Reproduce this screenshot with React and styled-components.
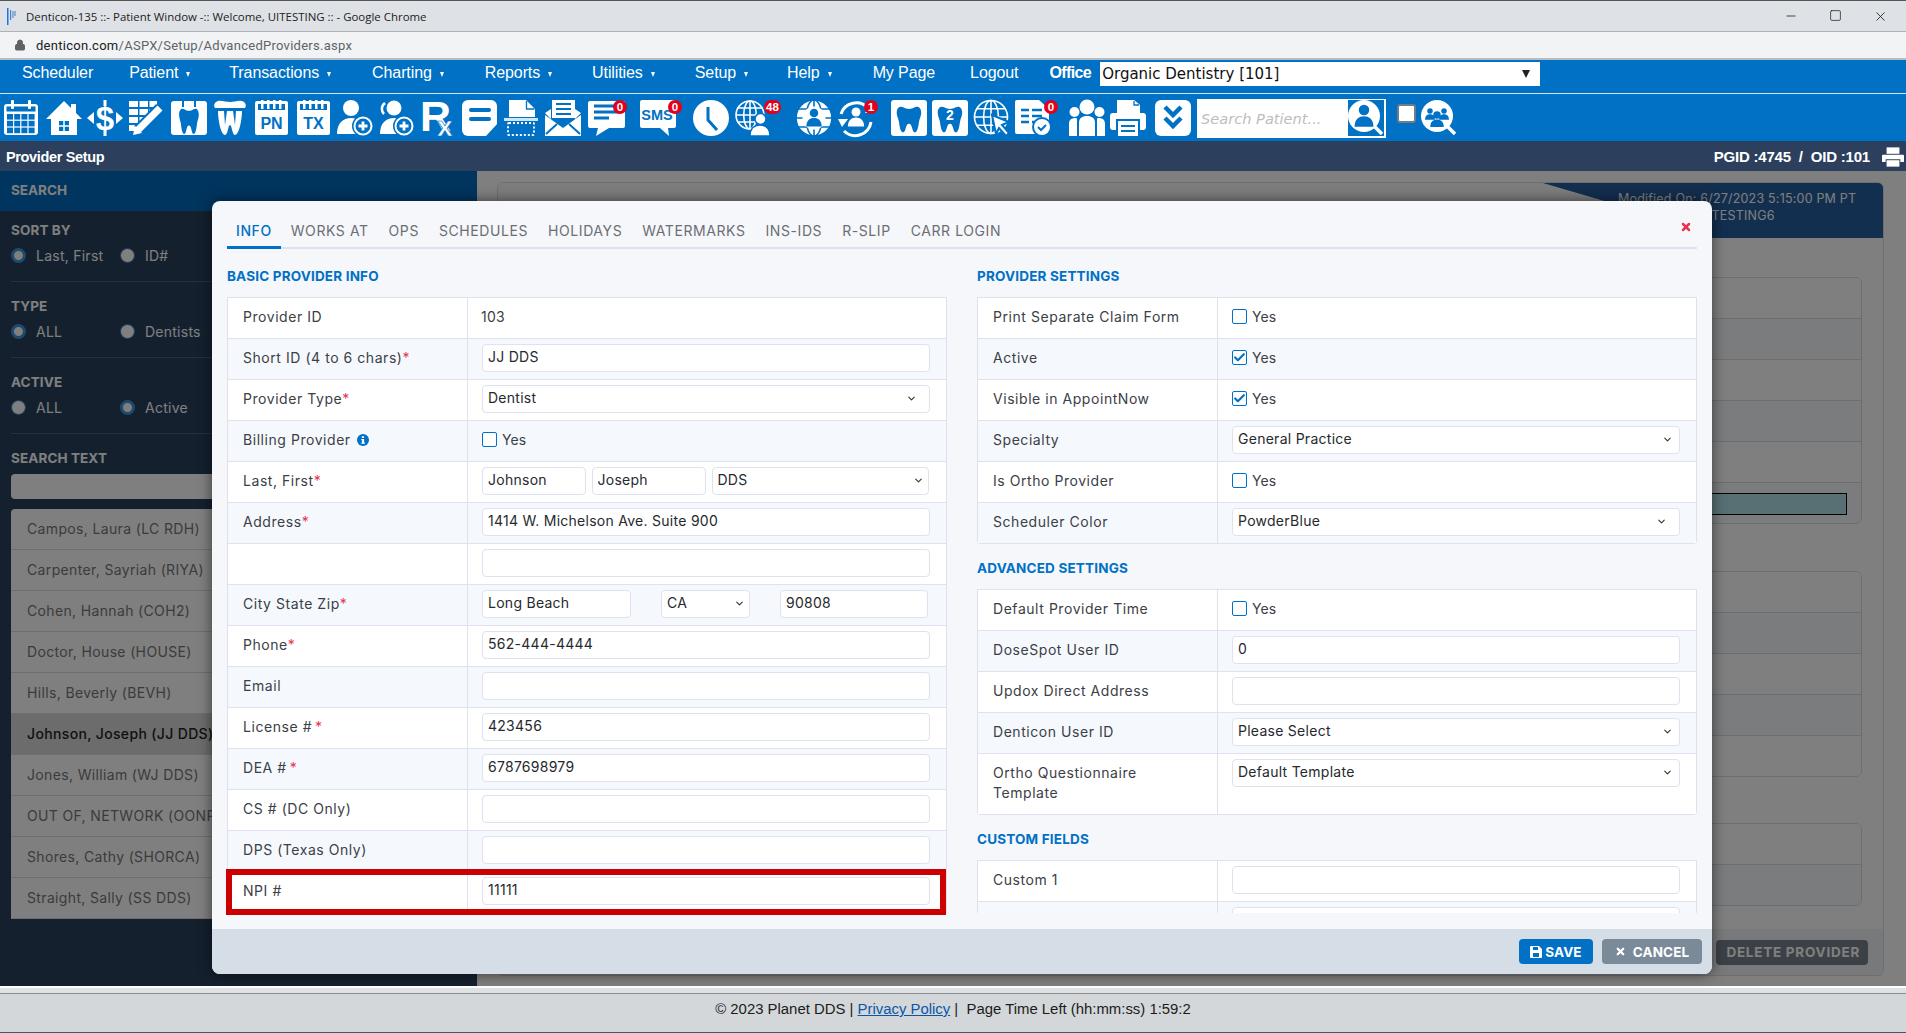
import React from 'react';
import styled, { createGlobalStyle } from 'styled-components';
import { Check, ChevronDown, Lock, Minus, Square, X } from 'lucide-react';

const B = '#0071c5';
const Sans = `'Inter', 'Liberation Sans', sans-serif`;
const Arial = `'Liberation Sans', Arial, sans-serif`;

const Global = createGlobalStyle`
  html, body { margin: 0; padding: 0; background: #fff; }
  * { box-sizing: border-box; }
`;
const Page = styled.div`width:1906px;height:1033px;display:flex;flex-direction:column;overflow:hidden;font-family:${Sans};background:#fff;`;
const TitleBar = styled.div`height:32px;flex:none;background:#dee1e6;border-top:1px solid #555;border-bottom:1px solid #aeb1b5;display:flex;align-items:center;padding-left:7px;`;
const TitleText = styled.span`font:11.45px 'Open Sans',sans-serif;color:#222;margin-left:10px;`;
const WindowBtns = styled.div`margin-left:auto;display:flex;gap:31px;padding-right:18px;color:#222;`;
const AddressBar = styled.div`height:28px;flex:none;background:#f1f3f4;border-bottom:2px solid #b9bcbf;display:flex;align-items:center;padding-left:14px;gap:10px;`;
const Url = styled.span`font:13px Roboto,sans-serif;color:#5f6368;letter-spacing:.27px;b{font-weight:400;color:#202124;}`;
const MenuBar = styled.div`height:34px;flex:none;background:${B};border-bottom:1px solid #cfe3f3;display:flex;align-items:flex-start;padding:0 0 0 22px;font-family:${Arial};`;
const MenuItem = styled.div`color:#fff;font-size:16px;letter-spacing:-.1px;line-height:1;margin-right:${p => p.$gap}px;padding-top:5px;display:flex;align-items:center;`;
const Caret = styled.span`width:0;height:0;border-left:2.5px solid transparent;border-right:2.5px solid transparent;border-top:5px solid #fff;margin-left:8px;margin-top:3px;`;
const OfficeLabel = styled.div`color:#fff;font-size:16px;font-weight:700;letter-spacing:-.6px;margin-right:9px;padding-top:5px;line-height:1;`;
const OfficeSelect = styled.div`width:440px;height:24px;margin-top:2px;background:#fff;color:#111;font:15px 'DejaVu Sans',sans-serif;display:flex;align-items:center;padding:0 10px 0 2px;justify-content:space-between;`;
const DownTri = styled.span`width:0;height:0;border-left:4.5px solid transparent;border-right:4.5px solid transparent;border-top:8px solid #222;`;
const Toolbar = styled.div`height:47px;flex:none;background:${B};display:flex;align-items:center;padding-left:3px;padding-top:1px;`;
const Slot = styled.div`position:relative;width:36px;height:36px;flex:none;margin-left:${p => p.$gap || 0}px;`;
const IconSvg = styled.svg`display:block;width:36px;height:36px;fill:#fff;overflow:visible;`;
const Badge = styled.span`position:absolute;top:0;left:${p => p.$left}px;min-width:14px;height:14px;padding:0 2px;border-radius:7px;background:#e3001b;color:#fff;font:700 11.5px/14px ${Arial};text-align:center;`;
const PatientSearch = styled.div`width:189px;height:39px;margin-left:6px;background:#fff;display:flex;align-items:center;justify-content:space-between;padding:0 2px 0 4px;`;
const Placeholder = styled.span`font:italic 14.6px 'DejaVu Sans',sans-serif;color:#bdbdbd;`;
const SearchBtn = styled.div`width:36px;height:36px;background:${B};`;
const MiniCheck = styled.span`width:19px;height:19px;margin:-10px 5px 0 11px;background:#fff;border:2px solid #6f7c86;border-radius:3px;flex:none;`;
const Header = styled.div`height:30px;flex:none;background:#2c405e;color:#fff;display:flex;align-items:center;justify-content:space-between;padding:1px 2px 0 6px;font:700 14.5px ${Arial};letter-spacing:-.35px;`;
const HeaderRight = styled.div`display:flex;align-items:center;gap:12px;font-size:15px;letter-spacing:-.2px;`;
const HeaderPrinter = styled.svg`width:22px;height:20px;fill:#fff;display:block;`;
const Body = styled.div`position:relative;height:815px;flex:none;display:flex;background:#fff;`;
const Sidebar = styled.aside`width:477px;flex:none;background:#29415d;color:#fff;font-size:14px;`;
const SideHead = styled.div`height:40px;background:#006abe;padding:0 11px 2px;display:flex;align-items:center;font-weight:700;font-size:13.5px;`;
const SideBody = styled.div`padding:9px 11px 0;`;
const SideGroup = styled.div`height:62px;border-bottom:1px solid #4b6180;margin-bottom:14px;`;
const SideTitle = styled.div`height:20px;line-height:20px;font-weight:700;font-size:13.5px;letter-spacing:.1px;`;
const RadioRow = styled.div`display:flex;margin-top:5px;height:20px;align-items:center;letter-spacing:.25px;`;
const RadioItem = styled.label`width:109px;display:flex;align-items:center;gap:10px;`;
const Dot = styled.span`width:15px;height:15px;border-radius:50%;background:#fff;border:${p => (p.$on ? 3 : 1)}px solid ${p => (p.$on ? '#3d94da' : '#2a76b8')};flex:none;`;
const SideInput = styled.div`height:25px;margin-top:6px;background:#fff;border-radius:4px;`;
const SideList = styled.div`margin-top:10px;border-radius:4px 4px 0 0;overflow:hidden;`;
const SideRow = styled.div`height:41px;padding-left:16px;display:flex;align-items:center;white-space:nowrap;font-size:14px;letter-spacing:.35px;padding-bottom:2px;background:${p => (p.$on ? '#d8d8d8' : '#fff')};font-weight:${p => (p.$on ? 500 : 400)};color:${p => (p.$on ? '#222' : '#777')};border-bottom:1px solid #ddd;`;
const Main = styled.main`flex:1;padding:11px 22px 10px 20px;min-width:0;`;
const Panel = styled.div`height:794px;border:1px solid #ddd;border-radius:6px;background:#fff;display:flex;flex-direction:column;overflow:hidden;`;
const PanelHead = styled.div`position:relative;height:55px;flex:none;background:#fafafa;`;
const PanelFlag = styled.div`position:absolute;right:0;top:0;bottom:0;width:340px;background:#265e9e;clip-path:polygon(0 0,100% 0,100% 100%,75px 100%,75px 40%);color:#fff;font-size:12.5px;line-height:17px;padding:7px 0 0 75px;letter-spacing:.2px;white-space:nowrap;`;
const PanelTables = styled.div`flex:1;padding:39px 21px 0 0;display:flex;flex-direction:column;align-items:flex-end;`;
const GhostTable = styled.div`width:700px;border:1px solid #ddd;border-radius:6px;margin-bottom:${p => p.$mb}px;overflow:hidden;`;
const GhostRow = styled.div`height:41px;border-bottom:1px solid #ddd;background:${p => (p.$alt ? '#f5f9fd' : '#fff')};display:flex;justify-content:flex-end;padding:10px 14px 0 0;&:last-child{border-bottom:0;height:40px;}`;
const ColorField = styled.div`width:400px;height:22px;background:#b0e0e6;border:1px solid #000;`;
const PanelFoot = styled.div`height:46px;flex:none;background:#eef3f7;display:flex;justify-content:flex-end;align-items:center;padding-right:15px;`;
const DeleteBtn = styled.div`height:25px;padding:0 8px 0 10px;background:#78838e;border-radius:4px;color:#fff;font-weight:700;font-size:13.5px;display:flex;align-items:center;letter-spacing:.75px;`;
const Overlay = styled.div`position:absolute;inset:0;background:rgba(0,0,0,.5);padding:30px 194px 12px 212px;`;
const Modal = styled.div`position:relative;height:100%;background:#f5f7fa;border-radius:8px;box-shadow:0 0 14px rgba(0,0,0,.55);display:flex;flex-direction:column;overflow:hidden;`;
const Tabs = styled.div`height:48px;flex:none;margin:0 15px;border-bottom:2px solid #dfe2ee;display:flex;align-items:flex-end;`;
const Tab = styled.div`height:37px;margin-bottom:-2px;padding:2px ${p => p.$pad}px 0;display:flex;align-items:center;font-size:14px;letter-spacing:.58px;white-space:nowrap;color:${p => (p.$on ? B : '#6c6e75')};font-weight:${p => (p.$on ? 500 : 400)};border-bottom:${p => (p.$on ? `3px solid ${B}` : '3px solid transparent')};`;
const CloseX = styled.div`position:absolute;top:20px;right:20px;color:#e8344f;display:flex;`;
const Scroll = styled.div`height:664px;flex:none;overflow:hidden;padding:0 15px;display:grid;grid-template-columns:720px 720px;column-gap:30px;align-items:start;`;
const Column = styled.div`display:flex;flex-direction:column;`;
const SectionTitle = styled.h3`margin:${p => p.$mt}px 0 11px;height:20px;line-height:20px;font-size:13.5px;font-weight:700;color:${B};letter-spacing:.18px;`;
const Table = styled.div`border:1px solid #dfe2ee;border-top:0;background:#fff;${p => p.$rounded && 'border-radius:0 0 4px 4px;'}`;
const Row = styled.div`display:grid;grid-template-columns:240px 1fr;height:${p => p.$h || 41}px;border-top:1px solid #dfe2ee;background:${p => (p.$alt ? '#f5f9fd' : '#fff')};`;
const Label = styled.div`padding:${p => (p.$two ? '9px 20px 0 15px' : '0 0 2px 15px')};display:flex;align-items:${p => (p.$two ? 'flex-start' : 'center')};font-size:14px;line-height:20px;letter-spacing:.55px;color:#3c4046;border-right:1px solid #dfe2ee;white-space:${p => (p.$two ? 'normal' : 'nowrap')};`;
const Star = styled.span`color:#e8344f;margin-left:${p => p.$gap || 0}px;`;
const Cell = styled.div`padding:5px 16px 0 14px;display:flex;gap:${p => p.$gap || 0}px;`;
const PlainCell = styled.div`padding:0 0 4px 13px;display:flex;align-items:center;font-size:14px;color:#3c4046;letter-spacing:.2px;`;
const Field = styled.input`display:block;width:${p => p.$w ? `${p.$w}px` : '100%'};flex:none;height:28px;border:1px solid #dfe2ee;border-radius:4px;background:#fff;padding:0 5px 3px;font:14px ${Sans};letter-spacing:.27px;color:#26292e;outline:0;`;
const SelectBox = styled.div`position:relative;width:${p => p.$w ? `${p.$w}px` : '100%'};flex:none;height:28px;border:1px solid #dfe2ee;border-radius:4px;background:#fff;padding:0 0 3px 5px;font:14px ${Sans};letter-spacing:.27px;color:#26292e;display:flex;align-items:center;`;
const SelectArrow = styled.span`position:absolute;right:${p => p.$r}px;top:7px;display:flex;color:#333;`;
const CheckCell = styled.label`padding:0 0 4px 14px;display:flex;align-items:center;gap:5px;font-size:14px;color:#3c4046;letter-spacing:.1px;`;
const CheckBox = styled.span`width:15px;height:15px;border:1px solid ${B};border-radius:2px;background:#fff;display:flex;align-items:center;justify-content:center;color:${B};`;
const ModalFoot = styled.div`flex:1;margin-top:16px;background:#d5dee7;display:flex;justify-content:flex-end;gap:9px;padding:10px 10px 0 0;`;
const Btn = styled.div`height:25px;width:${p => p.$w}px;background:${p => p.$bg};border-radius:4px;color:#fff;font-weight:700;font-size:13.5px;letter-spacing:.1px;display:flex;align-items:center;justify-content:center;gap:${p => p.$gap}px;`;
const BtnIcon = styled.svg`width:12px;height:12px;fill:#fff;display:block;`;
const Highlight = styled.div`position:absolute;left:14px;top:668px;width:720px;height:46px;border:6px solid #cc0000;pointer-events:none;`;
const Footer = styled.footer`flex:1;background:#d3d7d9;border-top:2px solid #fff;display:flex;flex-direction:column;`;
const FooterGap = styled.div`height:5px;background:#dfe2e4;border-bottom:1px solid #8a8d8f;flex:none;box-sizing:content-box;`;
const FooterText = styled.div`flex:1;display:flex;align-items:center;justify-content:center;padding-bottom:8px;font:14.9px ${Arial};color:#1c1c1c;border-bottom:1px solid #3c5a73;a{color:#0b56a8;text-decoration:underline;}`;
const InfoSvg = styled.svg`width:12px;height:12px;margin-left:6px;flex:none;`;

const Ico = ({ children }) => <IconSvg viewBox="0 0 36 36">{children}</IconSvg>;
const TOOTH = 'M10 3C6 1 1 3 1 10c0 4 2 7 3 11 1 6 2 14 6 14 4 0 3-11 8-11s4 11 8 11c4 0 5-8 6-14 1-4 3-7 3-11 0-7-5-9-9-7-3 1.500-5 2-8 2s-5-.5-8-2z';
const Person = ({ x = 18, y = 10, s = 1, c = B }) => (
  <g transform={`translate(${x} ${y}) scale(${s})`} fill={c}>
    <circle cx="0" cy="0" r="5" />
    <path d="M-9 16c0-7 4-10 9-10s9 3 9 10z" />
  </g>
);
const GlobeLines = ({ c = '#fff', r = 14, x = 15, y = 15, w = 1.6 }) => (
  <g fill="none" stroke={c} strokeWidth={w}>
    <circle cx={x} cy={y} r={r} />
    <ellipse cx={x} cy={y} rx={r * 0.45} ry={r} />
    <path d={`M${x - r} ${y}H${x + r}M${x - r * 0.87} ${y - r * 0.5}H${x + r * 0.87}M${x - r * 0.87} ${y + r * 0.5}H${x + r * 0.87}M${x} ${y - r}V${y + r}`} />
  </g>
);
const Page2 = ({ t }) => (
  <Ico>
    <rect x="2" y="1" width="33" height="34" rx="2" />
    <rect x="5" y="4" width="27" height="6" fill={B} />
    {[8, 14, 20, 26].map(v => <rect key={v} x={v} y="0" width="2.500" height="9" />)}
    <text x="18.500" y="29" textAnchor="middle" fontFamily={Arial} fontWeight="700" fontSize="16" fill={B}>{t}</text>
  </Ico>
);
const icons = [
  { gap: 0, el: <Ico><rect x="1" y="4" width="34" height="31" rx="3" /><rect x="3.500" y="6.500" width="29" height="5" fill={B} />{[8, 25].map(v => <rect key={v} x={v} y="0" width="3" height="9" rx="1" />)}{[0, 1, 2].map(r => [0, 1, 2, 3].map(c => <rect key={`${r}${c}`} x={4 + c * 7.2} y={14 + r * 6.8} width="6" height="5.600" fill={B} />))}</Ico> },
  { gap: 7, el: <Ico><polygon points="18,1 36,19 31,19 31,35 5,35 5,19 0,19" /><rect x="25" y="4" width="5" height="9" /><rect x="13" y="21" width="10" height="10" fill={B} /><path d="M18 21v10M13 26h10" stroke="#fff" strokeWidth="1.500" /></Ico> },
  { gap: 5, el: <Ico><rect x="16.500" y="0" width="3" height="6" /><rect x="16.500" y="30" width="3" height="6" /><text x="18" y="29.500" textAnchor="middle" fontFamily={Arial} fontWeight="700" fontSize="33">$</text><polygon points="0,18 7,12 7,24" /><polygon points="36,18 29,12 29,24" /></Ico> },
  { gap: 6, el: <Ico>{[1, 9, 17, 25].map((y, i) => <g key={y}><rect x="0" y={y} width={28 - i * 7} height="6" />{[9, 19].map(x => x < 28 - i * 7 && <rect key={x} x={x} y={y} width="1.500" height="6" fill={B} />)}</g>)}<path d="M9 30L31 8" stroke={B} strokeWidth="11" /><path d="M9 30L31 8" stroke="#fff" strokeWidth="7" /><polygon points="4,35 6,26 13,33" /></Ico> },
  { gap: 6, el: <Ico><rect x="0" y="1" width="36" height="34" rx="3" /><rect x="11" y="0" width="2" height="7" fill={B} /><rect x="23" y="0" width="2" height="7" fill={B} /><path d={TOOTH} fill={B} transform="translate(7.500 7) scale(.58 .77)" /></Ico> },
  { gap: 5, el: <Ico><path d="M6 1c4-1 8 1 12 1s8-2 12-1c3 1 5 4 3 7H3C1 5 3 2 6 1z" /><path d="M6 11h6l1 14 2-14h6l2 14 1-14h6c0 9-3 24-7 24-3 0-3-10-5-10s-2 10-5 10c-4 0-7-15-7-24z" /></Ico> },
  { gap: 5, el: <Page2 t="PN" /> },
  { gap: 6, el: <Page2 t="TX" /> },
  { gap: 6, el: <Ico><circle cx="14" cy="8" r="8" /><path d="M0 34c0-11 6-16 14-16s14 5 14 16z" /><circle cx="26" cy="26" r="11" fill={B} /><circle cx="26" cy="26" r="8.500" fill="none" stroke="#fff" strokeWidth="2" /><path d="M26 21.500v9M21.500 26h9" stroke="#fff" strokeWidth="2.800" /></Ico> },
  { gap: 5, el: <Ico><circle cx="16" cy="8" r="7.500" /><path d="M7 3C3 6 3 11 6 14" fill="none" stroke="#fff" strokeWidth="2.500" /><path d="M2 34c0-11 6-16 14-16s14 5 14 16z" /><circle cx="26" cy="26" r="11" fill={B} /><circle cx="26" cy="26" r="8.500" fill="none" stroke="#fff" strokeWidth="2" /><path d="M26 21.500v9M21.500 26h9" stroke="#fff" strokeWidth="2.800" /></Ico> },
  { gap: 6, el: <Ico><text x="0" y="31" fontFamily={Arial} fontWeight="700" fontSize="43">R</text><text x="17" y="36" fontFamily={Arial} fontWeight="700" fontSize="28" stroke={B} strokeWidth=".6">x</text></Ico> },
  { gap: 6, el: <Ico><rect x="0" y="0" width="35" height="36" rx="6" /><rect x="7" y="8" width="22" height="4" rx="2" fill={B} /><rect x="7" y="17" width="22" height="4" rx="2" fill={B} /><path d="M36 23L24 36h12z" fill={B} /><path d="M33 25.500H25.500V33z" /></Ico> },
  { gap: 6, el: <Ico><path d="M5 0h17l9 9v8H5z" /><path d="M22.500 1v8h8" fill="none" stroke={B} strokeWidth="1.300" /><rect x="0" y="18" width="34" height="3" fill="#cfe4f5" /><rect x="4" y="23" width="26" height="12" rx="1" fill="none" stroke="#fff" strokeWidth="2" strokeDasharray="2 2" /></Ico> },
  { gap: 5, el: <Ico><rect x="7" y="0" width="23" height="18" /><path d="M11 4h15M11 9h15M11 14h15" stroke={B} strokeWidth="2" /><path d="M0 13l6-4v10zM36 13l-6-4v10z" /><path d="M0 15l18 13 18-13v21H0z" /><path d="M1 34l11-10M35 34L24 24" stroke={B} strokeWidth="2" /></Ico> },
  { gap: 7, badge: { left: 25, t: '0' }, el: <Ico><path d="M2 1h33a2 2 0 012 2v23a2 2 0 01-2 2H21L8 36l2-8H2a2 2 0 01-2-2V3a2 2 0 012-2z" /><path d="M6 6h26M6 12h26M6 18h15" stroke={B} strokeWidth="3" /></Ico> },
  { gap: 16, badge: { left: 28, t: '0' }, el: <Ico><path d="M2 0h32a2 2 0 012 2v24a2 2 0 01-2 2h-6l1 8-9-8H2a2 2 0 01-2-2V2a2 2 0 012-2z" /><text x="17" y="20" textAnchor="middle" fontFamily={Arial} fontWeight="700" fontSize="14.500" fill={B}>SMS</text></Ico> },
  { gap: 17, el: <Ico><circle cx="18" cy="18" r="18" /><path d="M15 7v13l9 10" fill="none" stroke={B} strokeWidth="3" /></Ico> },
  { gap: 6, badge: { left: 29, t: '48', w: 19 }, el: <Ico><GlobeLines /><path d="M15 36c0-7 4-11 10-11s10 4 10 11z" stroke={B} strokeWidth="1.500" /><circle cx="25.500" cy="19" r="5.500" stroke={B} strokeWidth="1.500" /></Ico> },
  { gap: 25, el: <Ico><circle cx="18" cy="18" r="18" /><GlobeLines c={B} r={18} x={18} y={18} w={1.6} /><circle cx="18" cy="18" r="11.500" /><Person y={13} s={0.85} /></Ico> },
  { gap: 6, badge: { left: 26, t: '1' }, el: <Ico><path d="M3 14A16 16 0 0130 8M33 22A16 16 0 016 31" fill="none" stroke="#fff" strokeWidth="3" /><polygon points="0,19 10,19 4,27" /><polygon points="36,13 27,13 33,5" /><Person c="#fff" y={12} s={0.9} /></Ico> },
  { gap: 17, el: <Ico><rect x="0" y="0" width="36" height="36" rx="3" /><path d={TOOTH} fill={B} transform="translate(5 5) scale(.72 .78)" /></Ico> },
  { gap: 5, el: <Ico><rect x="0" y="0" width="36" height="36" rx="3" /><path d={TOOTH} fill={B} transform="translate(5 5) scale(.72 .78)" /><text x="18" y="20" textAnchor="middle" fontFamily={Arial} fontWeight="700" fontSize="14">2</text></Ico> },
  { gap: 6, el: <Ico><GlobeLines r={16.5} x={17} y={17} /><path d="M18 15l17 7-7 3 7 8-3 3-7-8-3 6z" stroke={B} strokeWidth="2" /></Ico> },
  { gap: 5, badge: { left: 29, t: '0' }, el: <Ico><path d="M2 0h22l10 9v25H2a2 2 0 01-2-2V2a2 2 0 012-2z" /><path d="M6 10h8M6 16h8M6 22h8M17 10h10M17 16h10M17 22h4" stroke={B} strokeWidth="2.500" /><circle cx="27" cy="27" r="10" fill={B} /><circle cx="27" cy="27" r="8" /><path d="M23 27l3 3 5-5" fill="none" stroke={B} strokeWidth="2" /></Ico> },
  { gap: 18, el: <Ico><circle cx="18" cy="7" r="7.500" /><circle cx="5.500" cy="12" r="5" /><circle cx="30.500" cy="12" r="5" /><path d="M10 36V23c0-5 3-7 8-7s8 2 8 7v13z" /><path d="M0 36V24c0-4 2-6 7-6 1 0 1 1 1 3v15zM36 36V24c0-4-2-6-7-6-1 0-1 1-1 3v15z" /></Ico> },
  { gap: 5, el: <Ico><path d="M7 0h17l6 5v8H7z" /><path d="M24 1v4h5" fill="none" stroke={B} strokeWidth="1.300" /><rect x="0" y="13" width="36" height="17" rx="3" /><rect x="6" y="19" width="24" height="17" fill={B} /><rect x="8" y="21" width="20" height="15" /><path d="M11 26h14M11 31h14" stroke={B} strokeWidth="2" /></Ico> },
  { gap: 9, el: <Ico><rect x="0" y="0" width="36" height="36" rx="6" /><path d="M10 7l8 8 8-8M10 18l8 8 8-8" fill="none" stroke={B} strokeWidth="4.500" /></Ico> },
];
const SearchGlass = ({ children }) => <Ico><path d="M26 26l8 8" stroke="#fff" strokeWidth="3.500" /><circle cx="16" cy="16" r="16" />{children}</Ico>;

const opt = (v, r = 15) => ({ sel: v, r });
const basic = [
  { l: 'Provider ID', plain: '103' },
  { l: 'Short ID (4 to 6 chars)', req: 1, v: 'JJ DDS' },
  { l: 'Provider Type', req: 1, ...opt('Dentist', 12) },
  { l: 'Billing Provider', info: 1, chk: 0 },
  { l: 'Last, First', req: 1, name: 1 },
  { l: 'Address', req: 1, v: '1414 W. Michelson Ave. Suite 900' },
  { l: '', v: '' },
  { l: 'City State Zip', req: 1, city: 1 },
  { l: 'Phone', req: 1, v: '562-444-4444' },
  { l: 'Email', v: '' },
  { l: 'License #', req: 2, v: '423456' },
  { l: 'DEA #', req: 2, v: '6787698979' },
  { l: 'CS # (DC Only)', v: '' },
  { l: 'DPS (Texas Only)', v: '' },
  { l: 'NPI #', v: '11111' },
];
const settings = [
  { l: 'Print Separate Claim Form', chk: 0 },
  { l: 'Active', chk: 1 },
  { l: 'Visible in AppointNow', chk: 1 },
  { l: 'Specialty', ...opt('General Practice', 6) },
  { l: 'Is Ortho Provider', chk: 0 },
  { l: 'Scheduler Color', ...opt('PowderBlue', 12) },
];
const advanced = [
  { l: 'Default Provider Time', chk: 0 },
  { l: 'DoseSpot User ID', v: '0' },
  { l: 'Updox Direct Address', v: '' },
  { l: 'Denticon User ID', ...opt('Please Select', 6) },
  { l: 'Ortho Questionnaire Template', two: 1, ...opt('Default Template', 6) },
];
const custom = [{ l: 'Custom 1', v: '' }, { l: 'Custom 2', v: '' }];

const Sel = ({ v, r, w }) => (
  <SelectBox $w={w}>{v}<SelectArrow $r={r}><ChevronDown size={11} strokeWidth={2.4} /></SelectArrow></SelectBox>
);
const Info = () => (
  <InfoSvg viewBox="0 0 12 12"><circle cx="6" cy="6" r="6" fill={B} /><path d="M4.800 2.200h2.300v1.700H4.800zM4.300 5h2.800v3.500h.8v1.300H4.300V8.500h.8V6.200h-.8z" fill="#fff" /></InfoSvg>
);
const FieldRow = ({ r, alt }) => (
  <Row $alt={alt} $h={r.two ? 61 : undefined}>
    <Label $two={r.two}>
      <span>{r.l}{r.req === 1 && <Star>*</Star>}{r.req === 2 && <Star $gap={3}>*</Star>}</span>{r.info && <Info />}
    </Label>
    {r.plain && <PlainCell>{r.plain}</PlainCell>}
    {r.chk !== undefined && <CheckCell><CheckBox>{r.chk === 1 && <Check size={13} strokeWidth={4} />}</CheckBox>Yes</CheckCell>}
    {r.v !== undefined && <Cell><Field readOnly value={r.v} /></Cell>}
    {r.sel && <Cell><Sel v={r.sel} r={r.r} /></Cell>}
    {r.name && <Cell $gap={5.5}><Field readOnly value="Johnson" $w={104} /><Field readOnly value="Joseph" $w={114.5} /><Sel v="DDS" r={4} w={217} /></Cell>}
    {r.city && <Cell $gap={30}><Field readOnly value="Long Beach" $w={149} /><Sel v="CA" r={4} w={89} /><Field readOnly value="90808" $w={148} /></Cell>}
  </Row>
);
const FieldTable = ({ rows, rounded }) => (
  <Table $rounded={rounded}>{rows.map((r, i) => <FieldRow key={r.l + i} r={r} alt={i % 2 === 1} />)}</Table>
);
const Radio = ({ on, children }) => <RadioItem><Dot $on={on} />{children}</RadioItem>;
const people = ['Campos, Laura (LC RDH)', 'Carpenter, Sayriah (RIYA)', 'Cohen, Hannah (COH2)', 'Doctor, House (HOUSE)', 'Hills, Beverly (BEVH)', 'Johnson, Joseph (JJ DDS)', 'Jones, William (WJ DDS)', 'OUT OF, NETWORK (OONP)', 'Shores, Cathy (SHORCA)', 'Straight, Sally (SS DDS)'];
const tabs = ['WORKS AT', 'OPS', 'SCHEDULES', 'HOLIDAYS', 'WATERMARKS', 'INS-IDS', 'R-SLIP', 'CARR LOGIN'];
const menu = [['Scheduler', 36, 0], ['Patient', 39, 1], ['Transactions', 41, 1], ['Charting', 41, 1], ['Reports', 40, 1], ['Utilities', 40, 1], ['Setup', 39, 1], ['Help', 41, 1], ['My Page', 35, 0], ['Logout', 31, 0]];

export default function App() {
  return (
    <Page>
      <Global />
      <TitleBar>
        <svg width="9" height="17" viewBox="0 0 9 17"><path d="M0 0h1.500v17H0z" fill="#1a73e8" /><path d="M3 2h1.200v10H3zM5.500 3h1v7h-1zM7.500 3h1v5h-1z" fill="#4b7fbf" /></svg>
        <TitleText>Denticon-135 ::- Patient Window -:: Welcome, UITESTING :: - Google Chrome</TitleText>
        <WindowBtns>
          <Minus size={14} strokeWidth={1.4} />
          <Square size={13} strokeWidth={1.4} />
          <X size={15} strokeWidth={1.4} />
        </WindowBtns>
      </TitleBar>
      <AddressBar>
        <Lock size={12} color="#5f6368" fill="#5f6368" />
        <Url><b>denticon.com</b>/ASPX/Setup/AdvancedProviders.aspx</Url>
      </AddressBar>
      <MenuBar>
        {menu.map(([t, g, c]) => <MenuItem key={t} $gap={g}>{t}{c === 1 && <Caret />}</MenuItem>)}
        <OfficeLabel>Office</OfficeLabel>
        <OfficeSelect>Organic Dentistry [101]<DownTri /></OfficeSelect>
      </MenuBar>
      <Toolbar>
        {icons.map((ic, i) => (
          <Slot key={i} $gap={ic.gap}>
            {ic.el}
            {ic.badge && <Badge $left={ic.badge.left}>{ic.badge.t}</Badge>}
          </Slot>
        ))}
        <PatientSearch>
          <Placeholder>Search Patient...</Placeholder>
          <SearchBtn><SearchGlass><Person y={10} x={16} s={1.05} /></SearchGlass></SearchBtn>
        </PatientSearch>
        <MiniCheck />
        <Slot><SearchGlass><Person x={9} y={11} s={0.55} /><Person x={23} y={11} s={0.55} /><Person x={16} y={15} s={0.75} /></SearchGlass></Slot>
      </Toolbar>
      <Header>
        <span>Provider Setup</span>
        <HeaderRight>PGID :4745&nbsp; / &nbsp;OID :101
          <HeaderPrinter viewBox="0 0 24 21"><path d="M5 0h14v7H5z" /><path d="M1 8h22a1 1 0 011 1v6a1 1 0 01-1 1h-3v-3H4v3H1a1 1 0 01-1-1V9a1 1 0 011-1z" /><path d="M5 14h14v7H5z" /></HeaderPrinter>
        </HeaderRight>
      </Header>
      <Body>
        <Sidebar>
          <SideHead>SEARCH</SideHead>
          <SideBody>
            <SideGroup>
              <SideTitle>SORT BY</SideTitle>
              <RadioRow><Radio on>Last, First</Radio><Radio>ID#</Radio></RadioRow>
            </SideGroup>
            <SideGroup>
              <SideTitle>TYPE</SideTitle>
              <RadioRow><Radio on>ALL</Radio><Radio>Dentists</Radio></RadioRow>
            </SideGroup>
            <SideGroup>
              <SideTitle>ACTIVE</SideTitle>
              <RadioRow><Radio>ALL</Radio><Radio on>Active</Radio></RadioRow>
            </SideGroup>
            <SideTitle>SEARCH TEXT</SideTitle>
            <SideInput />
            <SideList>{people.map(p => <SideRow key={p} $on={p.startsWith('Johnson')}>{p}</SideRow>)}</SideList>
          </SideBody>
        </Sidebar>
        <Main>
          <Panel>
            <PanelHead><PanelFlag>Modified On: 6/27/2023 5:15:00 PM PT<br />Modified By: UITESTING6</PanelFlag></PanelHead>
            <PanelTables>
              <GhostTable $mb={47}>{[0, 1, 2, 3, 4].map(i => <GhostRow key={i} $alt={i % 2 === 1} />)}<GhostRow $alt><ColorField /></GhostRow></GhostTable>
              <GhostTable $mb={46}>{[0, 1, 2, 3, 4].map(i => <GhostRow key={i} $alt={i % 2 === 1} />)}</GhostTable>
              <GhostTable $mb={0}>{[0, 1].map(i => <GhostRow key={i} $alt={i % 2 === 1} />)}</GhostTable>
            </PanelTables>
            <PanelFoot><DeleteBtn>DELETE PROVIDER</DeleteBtn></PanelFoot>
          </Panel>
        </Main>
        <Overlay>
          <Modal>
            <Tabs>
              <Tab $on $pad={9}>INFO</Tab>
              {tabs.map(t => <Tab key={t} $pad={10}>{t}</Tab>)}
            </Tabs>
            <CloseX><X size={12} strokeWidth={5} /></CloseX>
            <Scroll>
              <Column>
                <SectionTitle $mt={17}>BASIC PROVIDER INFO</SectionTitle>
                <FieldTable rows={basic} />
              </Column>
              <Column>
                <SectionTitle $mt={17}>PROVIDER SETTINGS</SectionTitle>
                <FieldTable rows={settings} rounded />
                <SectionTitle $mt={14}>ADVANCED SETTINGS</SectionTitle>
                <FieldTable rows={advanced} rounded />
                <SectionTitle $mt={14}>CUSTOM FIELDS</SectionTitle>
                <FieldTable rows={custom} />
              </Column>
            </Scroll>
            <Highlight />
            <ModalFoot>
              <Btn $bg={B} $w={74} $gap={3}>
                <BtnIcon viewBox="0 0 12 12"><path fillRule="evenodd" d="M0 1a1 1 0 011-1h8l3 3v8a1 1 0 01-1 1H1a1 1 0 01-1-1zM3 1v3h5V1zM3 7v4h6V7z" /></BtnIcon>SAVE
              </Btn>
              <Btn $bg="#7b8a99" $w={100} $gap={7}><X size={11} strokeWidth={5} />CANCEL</Btn>
            </ModalFoot>
          </Modal>
        </Overlay>
      </Body>
      <Footer>
        <FooterGap />
        <FooterText><span>© 2023 Planet DDS | <a>Privacy Policy</a> |&nbsp; Page Time Left (hh:mm:ss) 1:59:2</span></FooterText>
      </Footer>
    </Page>
  );
}
